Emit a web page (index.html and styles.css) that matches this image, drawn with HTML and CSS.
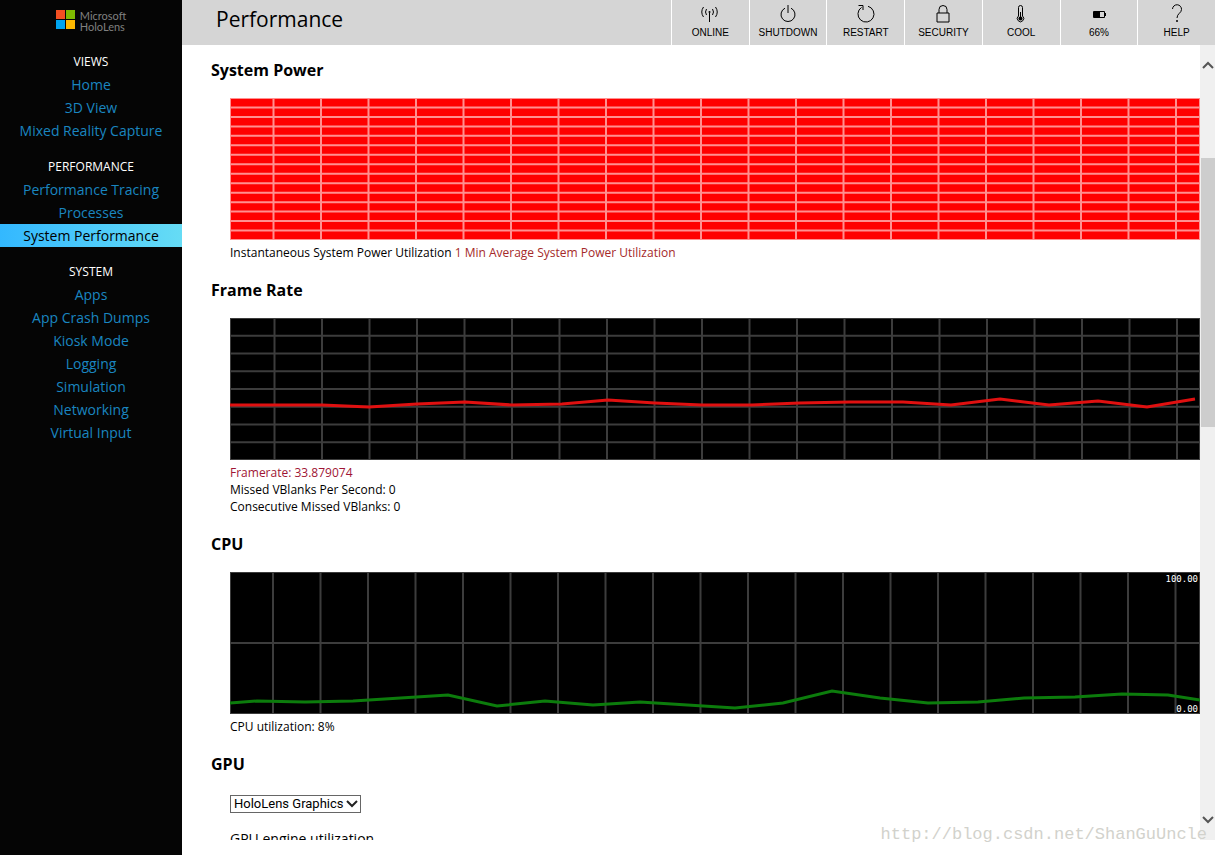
FILE: index.html
```html
<!DOCTYPE html>
<html lang="en">
<head>
    <meta charset="UTF-8">
    <meta name="viewport" content="width=device-width, initial-scale=1.0">
    <title>Performance - Microsoft HoloLens</title>
    <link rel="stylesheet" href="styles.css">
</head>
<body>
    <nav class="sidebar">
        <a class="logo" href="#">
            <svg width="20" height="20" viewBox="0 0 20 20">
                <rect x="0" y="0" width="9" height="9" fill="#f25022"/>
                <rect x="10" y="0" width="9" height="9" fill="#7fba00"/>
                <rect x="0" y="10" width="9" height="9" fill="#00a4ef"/>
                <rect x="10" y="10" width="9" height="9" fill="#ffb900"/>
            </svg>
            <span>Microsoft<br>HoloLens</span>
        </a>
        <div class="nav-group">
            <h3>VIEWS</h3>
            <a href="#">Home</a>
            <a href="#">3D View</a>
            <a href="#">Mixed Reality Capture</a>
        </div>
        <div class="nav-group">
            <h3>PERFORMANCE</h3>
            <a href="#">Performance Tracing</a>
            <a href="#">Processes</a>
            <a href="#" class="active">System Performance</a>
        </div>
        <div class="nav-group">
            <h3>SYSTEM</h3>
            <a href="#">Apps</a>
            <a href="#">App Crash Dumps</a>
            <a href="#">Kiosk Mode</a>
            <a href="#">Logging</a>
            <a href="#">Simulation</a>
            <a href="#">Networking</a>
            <a href="#">Virtual Input</a>
        </div>
    </nav>

    <div class="page">
        <header class="topbar">
            <h1>Performance</h1>
            <div class="tools">
                <button type="button">
                    <svg viewBox="0 0 20 20">
                        <path d="M9.500 9v9"/>
                        <circle cx="9.500" cy="8" r="1" fill="#000" stroke="none"/>
                        <path d="M6.500 5Q4.500 8 6.500 11M12.500 5Q14.500 8 12.500 11M3.500 3Q0 8 3.500 13M15.500 3Q19 8 15.500 13"/>
                    </svg>
                    <span>ONLINE</span>
                </button>
                <button type="button">
                    <svg viewBox="0 0 20 20">
                        <path d="M10 1v8M7 4.200A7 7 0 1 0 13 4.200"/>
                    </svg>
                    <span>SHUTDOWN</span>
                </button>
                <button type="button">
                    <svg viewBox="0 0 20 20">
                        <path d="M5.500 3.400A8 8 0 1 0 12 2.300M2.500 1.500H7V6"/>
                    </svg>
                    <span>RESTART</span>
                </button>
                <button type="button">
                    <svg viewBox="0 0 20 20">
                        <path d="M4 9h12v9H4zM6 9V5.500a4 4 0 0 1 8 0V9"/>
                    </svg>
                    <span>SECURITY</span>
                </button>
                <button type="button">
                    <svg viewBox="0 0 20 20">
                        <path d="M7.500 12V3.500a2 2 0 0 1 4 0V12a3.200 3.200 0 1 1-4 0z"/>
                        <path d="M9.500 8v6"/>
                        <circle cx="9.500" cy="14.500" r="2" fill="#000" stroke="none"/>
                    </svg>
                    <span>COOL</span>
                </button>
                <button type="button">
                    <svg viewBox="0 0 20 20">
                        <path d="M4.500 7.500h11v6h-11zM16.500 9v3"/>
                        <rect x="5" y="8" width="6" height="5" fill="#000" stroke="none"/>
                    </svg>
                    <span>66%</span>
                </button>
                <button type="button">
                    <svg viewBox="0 0 20 20">
                        <path d="M5.500 5a4.500 4.500 0 0 1 9 .5C14.500 9 10 9.500 10 14"/>
                        <circle cx="10" cy="17" r="1" fill="#000" stroke="none"/>
                    </svg>
                    <span>HELP</span>
                </button>
            </div>
        </header>

        <div class="viewport">
            <main class="content">
                <section>
                    <h2>System Power</h2>
                    <div class="chart power" id="powerChart"></div>
                    <p>Instantaneous System Power Utilization <span class="average">1 Min Average System Power Utilization</span></p>
                </section>
                <section>
                    <h2>Frame Rate</h2>
                    <div class="chart" id="frameChart"></div>
                    <p class="framerate">Framerate: 33.879074</p>
                    <p>Missed VBlanks Per Second: 0</p>
                    <p>Consecutive Missed VBlanks: 0</p>
                </section>
                <section>
                    <h2>CPU</h2>
                    <div class="chart" id="cpuChart">
                        <span class="max">100.00</span>
                        <span class="min">0.00</span>
                    </div>
                    <p>CPU utilization: 8%</p>
                </section>
                <section>
                    <h2>GPU</h2>
                    <div class="select-box">
                        <select id="gpu" aria-label="GPU">
                            <option>HoloLens Graphics</option>
                        </select>
                        <svg viewBox="0 0 12 10"><path d="M1 2l5 5 5-5"/></svg>
                    </div>
                    <p class="engine">GPU engine utilization</p>
                </section>
            </main>
            <div class="scrollbar">
                <button type="button" aria-label="Scroll up"><svg viewBox="0 0 12 10"><path d="M1 8l5-5 5 5"/></svg></button>
                <div class="track">
                    <div class="before"></div>
                    <div class="thumb"></div>
                    <div class="after"></div>
                </div>
                <button type="button" aria-label="Scroll down"><svg viewBox="0 0 12 10"><path d="M1 2l5 5 5-5"/></svg></button>
            </div>
        </div>
    </div>
    <div class="watermark">http://blog.csdn.net/ShanGuUncle</div>

    <script src="script.js"></script>
</body>
</html>
```

FILE: styles.css
```css
* {
    box-sizing: border-box;
}
body {
    margin: 0;
    height: 100vh;
    display: flex;
    overflow: hidden;
    font-family: "Open Sans", "Noto Sans", sans-serif;
    color: #000;
    background: #fff;
}
h1, h2, h3, p {
    margin: 0;
}

/* Sidebar */
.sidebar {
    flex: 0 0 182px;
    background: #050505;
    text-align: center;
}
.logo {
    height: 50px;
    padding-top: 10px;
    display: flex;
    justify-content: center;
    gap: 4px;
    color: #808080;
    font-family: Lato, "Open Sans", sans-serif;
    font-size: 11px;
    line-height: 11px;
    text-align: left;
    text-decoration: none;
}
.nav-group {
    margin-bottom: 13px;
}
.nav-group h3 {
    color: #fff;
    font-size: 12px;
    line-height: 23px;
    font-weight: normal;
}
.nav-group a {
    display: block;
    color: #1a86c0;
    font-size: 14px;
    line-height: 23px;
    text-decoration: none;
}
.nav-group a.active {
    color: #000;
    background: linear-gradient(to right, #33b8ff, #66dcf5);
}

/* Top bar */
.page {
    flex: 1;
    min-width: 0;
    display: flex;
    flex-direction: column;
    padding-bottom: 15px;
}
.topbar {
    height: 45px;
    display: flex;
    justify-content: space-between;
    background: #d5d5d5;
}
.topbar h1 {
    padding-left: 34px;
    font-size: 21px;
    line-height: 38px;
    font-weight: normal;
}
.tools {
    flex: 0 0 544px;
    display: grid;
    grid-template-columns: repeat(7, 1fr);
}
.tools button {
    display: flex;
    flex-direction: column;
    align-items: center;
    gap: 3px;
    padding: 4px 0 0;
    border: 0;
    border-left: 1px solid #fff;
    background: none;
    color: #000;
    font-family: "Liberation Sans", Arial, sans-serif;
    font-size: 10px;
    line-height: 12px;
}
.tools svg {
    width: 20px;
    height: 20px;
    fill: none;
    stroke: #000;
}

/* Content */
.viewport {
    flex: 1;
    min-height: 0;
    display: flex;
}
.content {
    flex: 1;
    min-width: 0;
    overflow: hidden;
    padding: 13px 0 0 48px;
}
.content section {
    margin-bottom: 17px;
}
.content h2 {
    margin: 0 0 16px -19px;
    font-size: 16px;
    line-height: 24px;
}
.content p {
    font-size: 12px;
    line-height: 17px;
}
.average {
    color: #a52a2a;
}
.content .framerate {
    color: #a01535;
}
.chart {
    position: relative;
    height: 142px;
    margin-bottom: 4px;
    background: #000;
    overflow: hidden;
}
.chart.power {
    background: #f00;
}
.chart svg {
    display: block;
    width: 100%;
    height: 100%;
}
.chart span {
    position: absolute;
    right: 2px;
    color: #fff;
    font-family: "DejaVu Sans Mono", monospace;
    font-size: 9px;
    line-height: 10px;
}
.chart .max {
    top: 2px;
}
.chart .min {
    bottom: 0;
}
.select-box {
    position: relative;
    width: 131px;
    margin: 19px 0 17px;
}
.select-box select {
    display: block;
    width: 100%;
    height: 18px;
    padding: 0 3px;
    border: 1px solid #666;
    border-radius: 0;
    background: #fff;
    color: #000;
    font-family: Roboto, Arial, sans-serif;
    font-size: 13px;
    line-height: 16px;
    appearance: none;
}
.select-box svg {
    position: absolute;
    right: 3px;
    top: 4px;
    width: 12px;
    height: 10px;
    fill: none;
    stroke: #222;
    stroke-width: 2;
    pointer-events: none;
}
.content .engine {
    font-size: 14px;
}

/* Scrollbar */
.scrollbar {
    flex: 0 0 15px;
    display: flex;
    flex-direction: column;
    background: #f0f0f0;
}
.scrollbar button {
    height: 40px;
    padding: 0;
    border: 0;
    background: none;
}
.scrollbar svg {
    width: 12px;
    height: 10px;
    fill: none;
    stroke: #555;
    stroke-width: 2;
}
.track {
    flex: 1;
    display: flex;
    flex-direction: column;
}
.before {
    flex: 73;
}
.thumb {
    flex: 269;
    margin-left: 1px;
    background: #cdcdcd;
}
.after {
    flex: 373;
}

.watermark {
    position: absolute;
    right: 8px;
    bottom: 10px;
    color: #d2d2cc;
    font-family: "Liberation Mono", monospace;
    font-size: 17px;
    line-height: 20px;
}
```

FILE: script.js
```js
var WIDTH = 970;
var HEIGHT = 142;

// Draws the grid and the line of one chart
function drawChart(id, options) {
    var grid = "";
    for (var x = options.offset; x < WIDTH; x += 47.5) {
        grid += "M" + x + " 0V" + HEIGHT;
    }
    for (var i = 1; i < options.rows; i++) {
        grid += "M0 " + (HEIGHT / options.rows * i) + "H" + WIDTH;
    }
    var svg = '<svg viewBox="0 0 ' + WIDTH + " " + HEIGHT + '" preserveAspectRatio="none">' +
        '<path d="' + grid + '" fill="none" stroke="' + options.gridColor + '" stroke-width="2"/>' +
        '<rect width="' + WIDTH + '" height="' + HEIGHT + '" fill="none" stroke="' + options.gridColor + '" stroke-width="2"/>';
    if (options.points) {
        svg += '<polyline points="' + options.points + '" fill="none" stroke="' + options.color + '" stroke-width="3"/>';
    }
    svg += "</svg>";
    document.getElementById(id).insertAdjacentHTML("afterbegin", svg);
}

drawChart("powerChart", {
    offset: 43.5,
    rows: 15,
    gridColor: "#ff9090"
});

drawChart("frameChart", {
    offset: 44.5,
    rows: 8,
    gridColor: "#3c3c3c",
    color: "#e01010",
    points: "0,87 92,87 139,89 187,86 235,84 282,87 332,86 378,82 425,85 472,87 522,87 570,85 620,84 673,84 721,87 770,81 819,87 868,83 917,89 965,81"
});

drawChart("cpuChart", {
    offset: 43,
    rows: 2,
    gridColor: "#3c3c3c",
    color: "#0c7c0c",
    points: "0,131 27,129 75,130 123,129 218,123 267,134 315,129 363,133 410,130 505,136 553,131 602,119 650,126 698,131 748,130 794,126 845,125 892,122 938,123 970,128"
});
```
